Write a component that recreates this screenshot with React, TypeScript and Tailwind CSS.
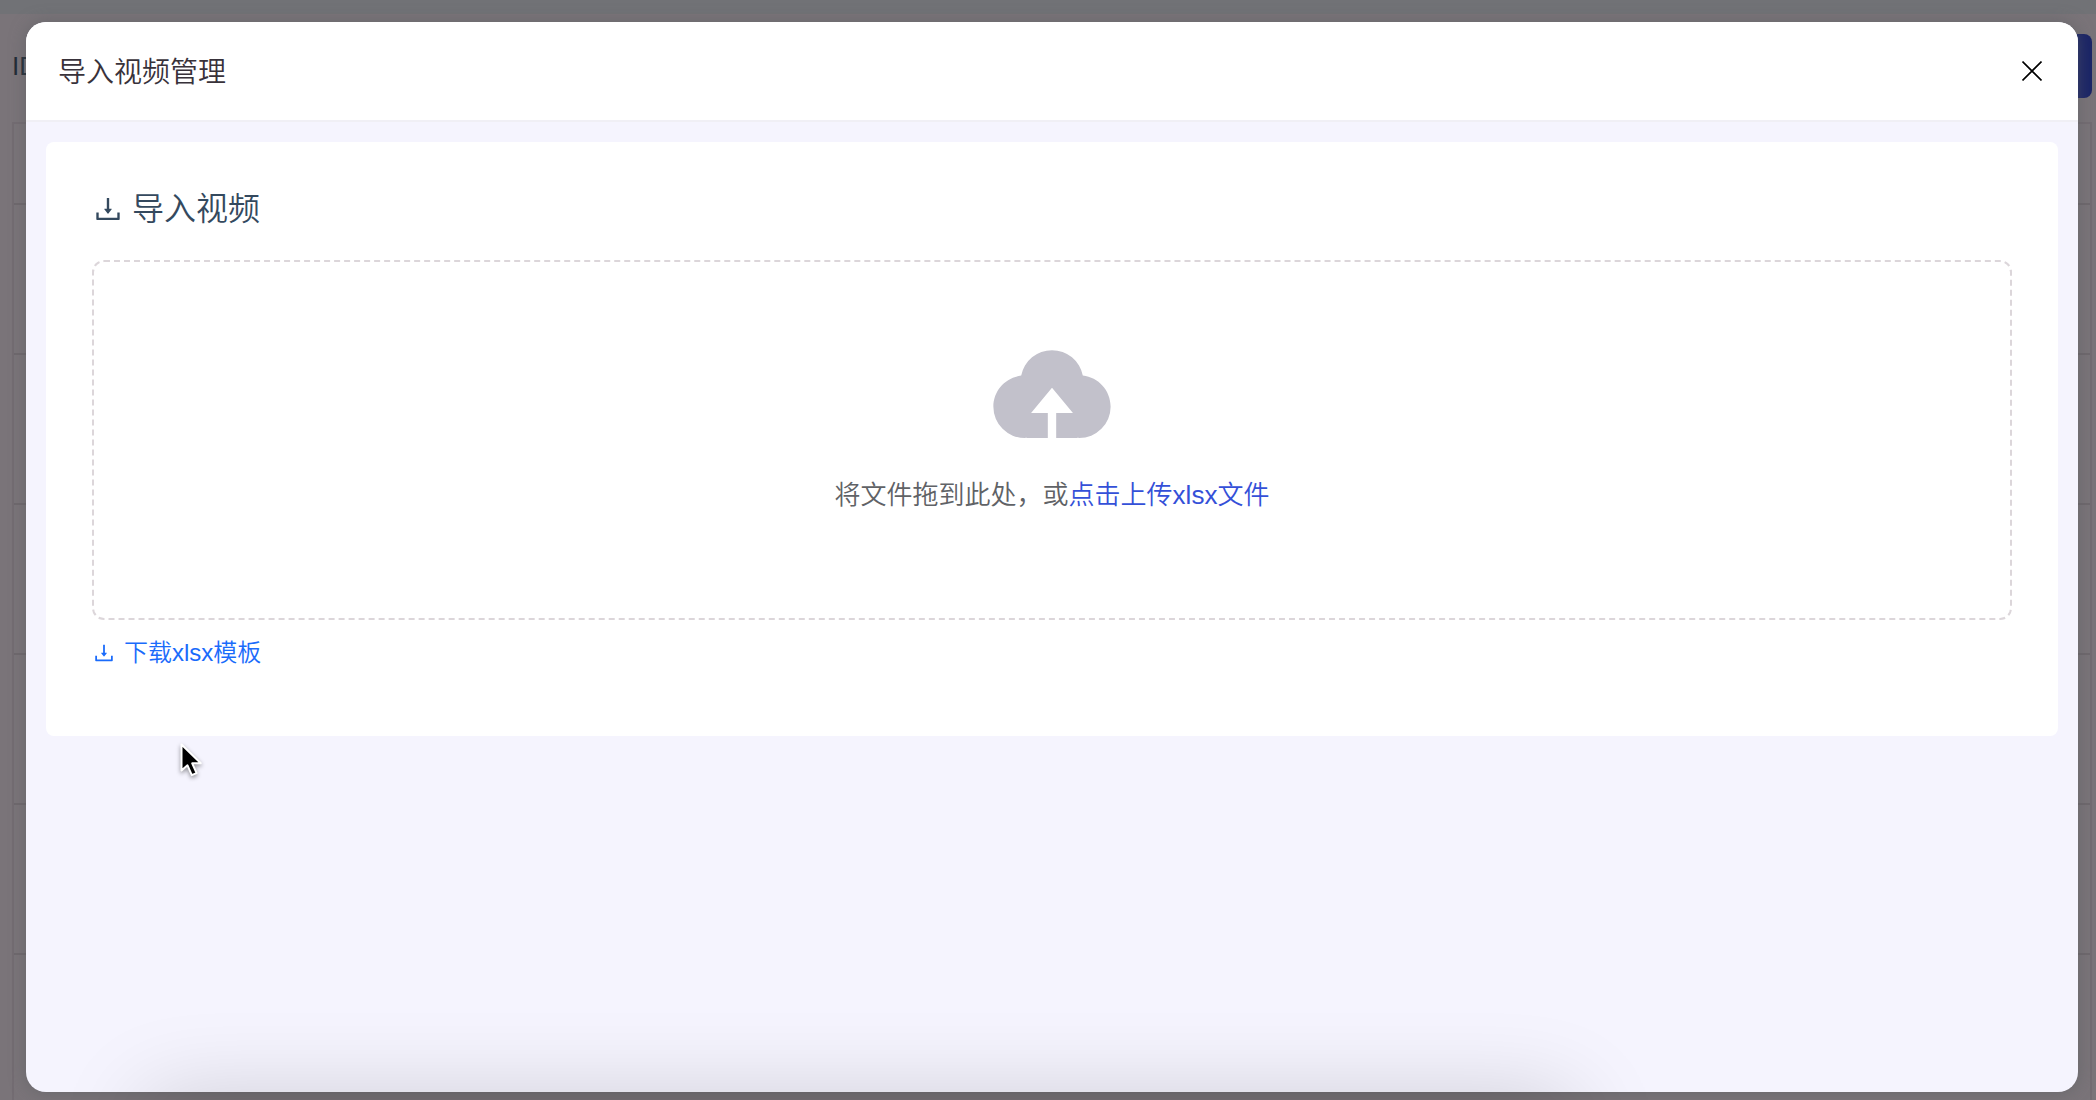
import React from "react";

function DownloadIcon({ className }: { className: string }) {
  return (
    <svg viewBox="0 0 1024 1024" fill="currentColor" aria-hidden="true" className={className}>
      <path d="M505.7 661a8 8 0 0 0 12.6 0l112-141.7c4.1-5.2.4-12.9-6.3-12.9h-74.1V168c0-4.4-3.6-8-8-8h-60c-4.4 0-8 3.6-8 8v338.3H400c-6.7 0-10.4 7.7-6.3 12.9l112 141.8zM878 626h-60c-4.4 0-8 3.6-8 8v154H214V634c0-4.4-3.6-8-8-8h-60c-4.4 0-8 3.6-8 8v198c0 17.7 14.3 32 32 32h684c17.7 0 32-14.3 32-32V634c0-4.4-3.6-8-8-8z" />
    </svg>
  );
}

function CloudUploadIcon({ className }: { className: string }) {
  return (
    <svg viewBox="0 0 1024 1024" fill="currentColor" aria-hidden="true" className={className}>
      <path d="M544 864V672h128L512 480 352 672h128v192H320v-1.6c-5.376.32-10.496 1.6-16 1.6A240 240 0 0 1 64 624c0-123.136 93.12-223.488 212.608-237.248A239.808 239.808 0 0 1 512 192a239.872 239.872 0 0 1 235.456 194.752c119.488 13.76 212.48 114.112 212.48 237.248a240 240 0 0 1-240 240c-5.376 0-10.56-1.28-16-1.6v1.6z" />
    </svg>
  );
}

/* The list page that stays dimmed behind the dialog. */
function DimmedPage() {
  return (
    <div aria-hidden="true" className="flex h-screen flex-col overflow-hidden bg-[#7a7479]">
      <div className="h-3.5 shrink-0 bg-[#717276]" />
      <div className="flex h-[108px] shrink-0 items-start justify-between pt-5 pr-1 pl-3">
        <span className="text-[26px] leading-[64px] text-[#1f2a35]">ID</span>
        <div className="h-16 w-32 rounded-lg bg-[#1a2466]" />
      </div>
      <div className="mr-1 ml-3 grow border-x-2 border-t-2 border-[#736c72]">
        <div className="h-[81px] border-b-2 border-[#6e686d]" />
        {[1, 2, 3, 4, 5].map((row) => (
          <div key={row} className="h-[150px] border-b-2 border-[#6e686d]" />
        ))}
      </div>
    </div>
  );
}

function ImportDialog() {
  return (
    <section
      role="dialog"
      aria-modal="true"
      aria-labelledby="dialog-title"
      className="flex grow flex-col overflow-hidden rounded-[20px] bg-[#f5f4fe] shadow-[0_0_16px_rgba(90,94,96,0.6)]"
    >
      <header className="flex items-center justify-between border-b-2 border-[#f0eff5] bg-white px-8 py-[25px]">
        <h1 id="dialog-title" className="pt-1 text-[28px] leading-[44px] text-[#38323a]">
          导入视频管理
        </h1>
        <button type="button" aria-label="关闭" className="flex size-7 items-center justify-center text-black">
          <svg viewBox="0 0 20 20" className="size-5" fill="none" stroke="currentColor" strokeWidth="1.6" aria-hidden="true">
            <path d="M0.5 0.5l19 19M19.5 0.5l-19 19" />
          </svg>
        </button>
      </header>

      <div className="p-5">
        <div className="rounded-lg bg-white px-[46px] pt-[43px] pb-16">
          <h2 className="mb-[27px] flex items-center gap-2 text-[32px] leading-[48px] text-[#34495e]">
            <DownloadIcon className="size-8" />
            导入视频
          </h2>

          <div className="flex h-[360px] flex-col items-center rounded-xl border-2 border-dashed border-[#dcd6da] pt-[63px]">
            <CloudUploadIcon className="mb-4 size-[134px] text-[#c2c1cb]" />
            <p className="text-[26px] leading-[40px] text-[#606266]">
              将文件拖到此处，或
              <button type="button" className="text-[#3450d8]">
                点击上传xlsx文件
              </button>
            </p>
          </div>

          <a href="#template" className="mt-[17px] inline-flex items-center gap-2 text-2xl leading-8 text-[#1a6bfb]">
            <DownloadIcon className="size-6" />
            下载xlsx模板
          </a>
        </div>
      </div>
    </section>
  );
}

export default function App() {
  return (
    <div className="relative h-screen overflow-hidden font-['Liberation_Sans','Noto_Sans_CJK_SC',sans-serif] font-[350]" lang="zh-CN">
      <DimmedPage />
      <div className="absolute inset-0 flex pt-[22px] pr-[18px] pb-2 pl-[26px]">
        <ImportDialog />
      </div>

      {/* Soft shade cast from below the window */}
      <div className="pointer-events-none absolute top-full right-[25%] left-[7%] h-20 shadow-[0_0_90px_rgba(0,0,0,0.18)]" />

      {/* Mouse pointer */}
      <svg
        viewBox="0 0 24 36"
        aria-hidden="true"
        className="pointer-events-none absolute top-[742px] left-[179px] h-9 w-6 drop-shadow-[0_2px_2px_rgba(0,0,0,0.4)]"
      >
        <path
          d="M2.5 2.5v26l6-5.2 4.3 9.9 4.8-2.1-4.4-9.8h8.6z"
          fill="#000"
          stroke="#fff"
          strokeWidth="2"
          strokeLinejoin="round"
        />
      </svg>
    </div>
  );
}
